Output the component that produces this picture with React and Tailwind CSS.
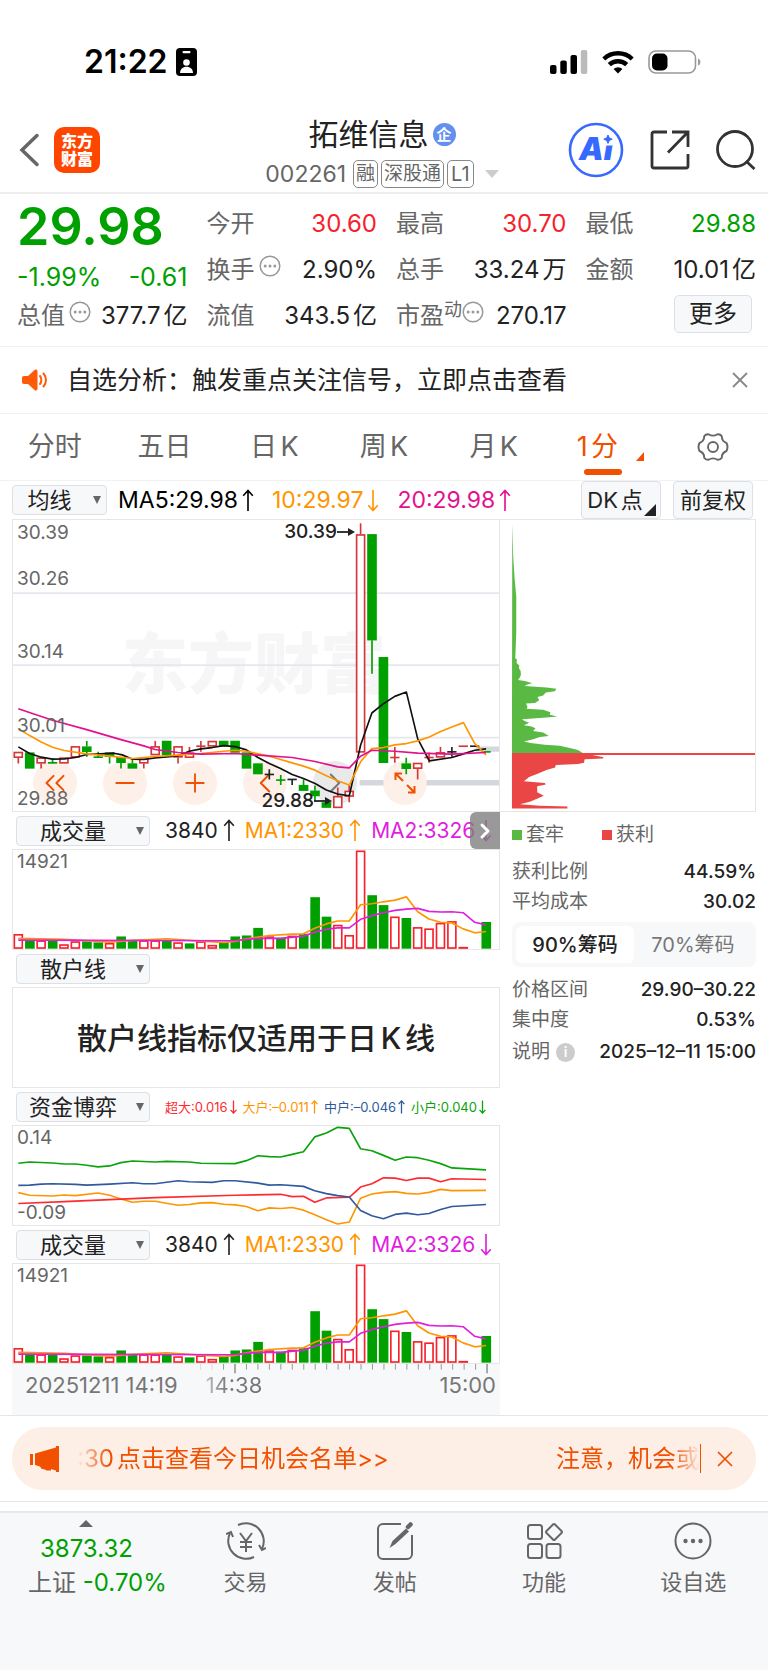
import { ChevronLeft, ChevronRight, ChevronsLeft, Minus, Plus, X } from 'lucide-react';

const STEP = 34.37;
const barX = (index) => 52 + index * STEP;

// [color, high, top, bottom, low], top === bottom draws a flat line
const candles = [
  ['r', 725, 725, 743, 760], ['g', 727, 727, 775, 775], ['r', 742, 742, 760, 775], ['g', 745, 758, 758, 760],
  ['r', 742, 742, 760, 760], ['r', 708, 708, 742, 742], ['g', 692, 709, 725, 740], ['g', 725, 741, 741, 742],
  ['g', 727, 727, 740, 760], ['g', 741, 741, 758, 775], ['g', 745, 760, 775, 775], ['r', 745, 745, 760, 775],
  ['r', 692, 708, 735, 735], ['g', 692, 692, 735, 735], ['r', 708, 708, 742, 760], ['r', 710, 727, 743, 743],
  ['r', 692, 708, 708, 725], ['r', 692, 692, 709, 709], ['g', 692, 692, 708, 708], ['g', 692, 692, 727, 727],
  ['g', 727, 727, 775, 775], ['g', 760, 760, 792, 792], ['k', 777, 793, 793, 808], ['g', 795, 810, 810, 825],
  ['k', 808, 808, 808, 825], ['g', 808, 825, 842, 842], ['g', 827, 842, 858, 875], ['g', 877, 877, 893, 893],
  ['r', 832, 858, 894, 894], ['r', 825, 842, 860, 877], ['r', 37, 70, 727, 727], ['g', 70, 70, 389, 490],
  ['g', 440, 440, 758, 758], ['r', 710, 742, 742, 758], ['g', 743, 760, 776, 792], ['r', 758, 758, 776, 808],
  ['r', 727, 742, 742, 758], ['r', 710, 726, 742, 742], ['k', 710, 725, 725, 740], ['r', 708, 708, 708, 708],
  ['k', 708, 708, 708, 708], ['g', 725, 725, 725, 725],
];

const candleColors = { r: '#d4373a', g: '#00a000', k: '#222222' };

const volumes = [
  ['r', 283], ['g', 300], ['r', 302], ['g', 302], ['r', 314], ['r', 305], ['g', 305], ['g', 308], ['r', 310],
  ['g', 290], ['g', 302], ['r', 302], ['r', 302], ['g', 302], ['r', 308], ['g', 311], ['r', 305], ['r', 316],
  ['g', 308], ['g', 290], ['g', 287], ['g', 264], ['r', 290], ['g', 294], ['r', 288], ['g', 282], ['g', 171],
  ['g', 230], ['r', 255], ['r', 286], ['r', 30], ['g', 165], ['g', 195], ['r', 230], ['g', 234], ['r', 262],
  ['r', 266], ['r', 249], ['r', 244], ['r', 322], null, ['g', 246],
];

const priceLines = [
  {
    color: '#111111',
    points: '52,710 86,730 121,741 155,747 190,746 224,742 258,733 300,731 340,729 365,734 396,747 430,748 464,743 533,737 567,723 602,716 636,712 671,706 705,709 739,719 774,742 808,760 842,775 877,793 911,805 946,820 980,840 1014,852 1049,857 1083,705 1117,608 1152,580 1186,558 1221,545 1255,685 1290,752 1358,742 1393,731 1427,720 1461,716',
  },
  {
    color: '#ff9500',
    points: '52,655 86,676 121,695 155,711 190,721 258,731 327,738 396,745 464,739 533,735 602,730 671,723 705,720 739,723 774,731 808,738 842,748 877,758 911,768 946,780 980,797 1014,812 1049,825 1083,755 1117,715 1152,712 1186,704 1221,700 1255,692 1290,680 1324,664 1358,650 1393,637 1427,700 1461,734',
  },
  {
    color: '#e3118f',
    points: '52,595 155,630 258,658 361,688 430,707 464,718 533,727 602,732 705,730 774,735 877,742 946,754 1014,770 1049,773 1083,738 1117,720 1186,723 1255,729 1358,732 1461,727',
  },
];

const volumeLines = [
  {
    color: '#ff9500',
    points: '52,296 190,299 327,307 396,302 499,297 602,304 671,308 705,305 739,297 774,292 808,287 877,283 911,282 945,265 980,252 1014,243 1049,243 1083,194 1117,191 1152,185 1187,180 1221,170 1255,215 1289,237 1324,247 1358,249 1392,267 1427,279 1461,275',
  },
  {
    color: '#e01ee0',
    points: '52,301 705,303 739,299 774,296 842,296 911,289 945,277 980,268 1014,264 1049,264 1083,238 1117,227 1152,218 1187,211 1221,207 1255,205 1289,214 1324,216 1358,215 1392,218 1427,247 1461,255',
  },
];

const fundLines = [
  {
    color: '#0ba30b',
    points: '52,217 86,213 155,216 190,219 224,219 258,223 292,228 327,225 361,215 396,210 464,213 499,211 567,213 602,217 705,218 739,209 774,194 808,197 842,198 877,190 911,182 945,137 980,125 1014,108 1049,111 1083,173 1117,179 1152,193 1187,208 1221,198 1255,200 1289,208 1324,218 1358,231 1461,237',
  },
  {
    color: '#ff9500',
    points: '52,306 86,314 155,316 190,313 224,315 292,307 327,314 361,325 396,335 430,332 464,332 533,344 567,342 602,337 636,336 671,341 705,343 739,348 774,361 808,352 842,354 877,351 911,359 945,373 980,388 1014,401 1049,395 1083,323 1117,310 1152,305 1187,303 1221,308 1255,310 1289,305 1324,296 1358,300 1461,299',
  },
  {
    color: '#ff2a2f',
    points: '52,339 190,333 327,327 464,321 705,314 842,311 877,318 911,317 945,335 980,322 1049,320 1083,289 1117,279 1152,261 1187,262 1221,269 1255,262 1289,262 1324,273 1358,264 1461,266',
  },
  {
    color: '#2f5a9e',
    points: '52,284 86,283 121,280 155,279 224,281 258,283 327,280 396,276 430,279 464,279 533,270 567,273 636,275 671,270 705,270 774,277 808,283 842,282 911,287 945,300 980,309 1014,315 1049,319 1083,360 1117,376 1152,385 1187,372 1221,368 1255,373 1289,369 1324,357 1358,348 1461,342',
  },
];

const trappedChips =
  '37,35 40,130 44,190 49,240 49,340 46,415 51,418 50,428 58,435 57,443 62,450 63,462 58,472 54,476 75,479 97,485 82,489 74,493 140,497 170,501 165,508 138,511 130,520 113,524 118,533 105,541 78,542 83,552 80,557 130,560 152,567 150,574 173,579 140,582 66,587 74,592 88,597 72,604 95,607 107,612 100,620 130,624 147,634 120,637 100,643 72,650 92,654 135,659 180,662 210,668 235,674 249,682 36,682';
const profitChips =
  '36,683 249,683 290,690 312,694 310,698 255,700 253,710 235,713 168,716 166,723 140,730 115,740 88,750 72,762 135,767 138,771 112,776 112,793 132,803 115,810 90,820 60,827 120,831 203,833 203,839 36,839';

function Arrow({ down, small }) {
  return (
    <svg
      viewBox="0 0 12 24"
      className={`${small ? 'h-[14px] w-[7px]' : 'h-[23px] w-3'} shrink-0 ${down ? 'rotate-180' : ''}`}
      fill="none"
      stroke="currentColor"
      strokeWidth={small ? 2.2 : 1.7}
      role="img"
      aria-label={down ? '下降' : '上升'}
    >
      <path d="M6 23V1.500M1 7l5-5.500L11 7" />
    </svg>
  );
}

function Dots() {
  return (
    <svg viewBox="0 0 22 22" className="h-[22px] w-[22px] shrink-0 text-[#999]" fill="none" stroke="currentColor" strokeWidth="1.5">
      <circle cx="11" cy="11" r="9.800" />
      <g fill="currentColor" stroke="none">
        <circle cx="6.200" cy="11" r="1.500" />
        <circle cx="11" cy="11" r="1.500" />
        <circle cx="15.800" cy="11" r="1.500" />
      </g>
    </svg>
  );
}

function StatusBar() {
  return (
    <div className="flex h-[106px] items-center justify-between pt-[18px] pr-[66px] pl-[84px] text-black">
      <div className="flex items-center gap-2">
        <span className="text-[32px] leading-8 font-semibold">21:22</span>
        <svg viewBox="0 0 21 28" className="h-7 w-[21px]">
          <rect width="21" height="28" rx="4" fill="#000" />
          <rect x="6.500" y="3" width="8" height="2.200" rx="1" fill="#fff" />
          <circle cx="10.500" cy="14.500" r="3.300" fill="#fff" />
          <path d="M4 25c0-4 2.800-6.300 6.500-6.300S17 21 17 25z" fill="#fff" />
        </svg>
      </div>
      <div className="flex items-center gap-[14px]">
        <svg viewBox="0 0 38 24" className="h-6 w-[38px]">
          <rect x="0" y="15" width="6.500" height="9" rx="2" />
          <rect x="10.300" y="10.500" width="6.500" height="13.500" rx="2" />
          <rect x="20.500" y="5" width="6.500" height="19" rx="2" />
          <rect x="30.800" y="0" width="6.500" height="24" rx="2" fill="#bbb" />
        </svg>
        <svg viewBox="0 0 32 24" className="h-6 w-8" fill="none" stroke="#000" strokeWidth="4.400">
          <path d="M1.800 9A20.500 20.500 0 0 1 30.200 9" />
          <path d="M7.300 14.700a12.500 12.500 0 0 1 17.400 0" />
          <path d="M16 23.500l-4.400-4.400a6.300 6.300 0 0 1 8.800 0z" fill="#000" stroke="none" />
        </svg>
        <svg viewBox="0 0 54 24" className="h-6 w-[54px]">
          <rect x="1" y="1" width="46.500" height="22" rx="7" fill="none" stroke="#999" strokeWidth="1.600" />
          <rect x="4" y="3.500" width="15.500" height="17" rx="5" />
          <path d="M50 8.500c3.200 1 3.200 6 0 7z" fill="#999" />
        </svg>
      </div>
    </div>
  );
}

function Header() {
  return (
    <header className="grid h-[88px] grid-cols-[1fr_auto_1fr] items-center border-b-2 border-[#eee] pr-3 pb-[3px] pl-4">
      <div className="flex items-center gap-3">
        <button type="button" aria-label="返回">
          <svg viewBox="0 0 26 36" className="h-9 w-[26px]" fill="none" stroke="#666" strokeWidth="3.500" strokeLinecap="round">
            <path d="M21 3.500L6 18l15 14.500" />
          </svg>
        </button>
        <a href="#home" className="flex h-[46px] w-[46px] flex-col items-center justify-center rounded-[10px] bg-[#ff4600] text-base leading-[18px] font-black text-white">
          <span>东方</span>
          <span>财富</span>
        </a>
      </div>
      <div className="pt-2 pr-2">
        <div className="flex h-10 items-center justify-center gap-1">
          <h1 className="text-[30px] leading-10 text-[#222]">拓维信息</h1>
          <span className="flex h-[23px] w-[23px] items-center justify-center rounded-full bg-[#6390ee] text-[15px] leading-none font-bold text-white">企</span>
        </div>
        <div className="flex h-10 items-center gap-[3px] text-[#666]">
          <span className="mr-1 text-[23px] leading-7">002261</span>
          <span className="rounded-[5px] border border-[#888] px-[2px] text-[19px] leading-[26px]">融</span>
          <span className="rounded-[5px] border border-[#888] px-[2px] text-[19px] leading-[26px]">深股通</span>
          <span className="rounded-[5px] border border-[#888] px-[3px] text-xl leading-[26px]">L1</span>
          <svg viewBox="0 0 14 8" className="ml-2 h-2 w-[14px]">
            <path d="M0 0h14L7 8z" fill="#ccc" />
          </svg>
        </div>
      </div>
      <div className="flex items-center justify-end gap-[26px] text-[#333]">
        <button type="button" aria-label="Ai">
          <svg viewBox="0 0 56 56" className="h-14 w-14">
            <circle cx="28" cy="28" r="26" fill="none" stroke="#3769ff" strokeWidth="2.600" />
            <text x="11" y="38" fill="#3769ff" fontFamily="Inter" fontSize="31" fontWeight="900" fontStyle="italic">Ai</text>
            <path d="M33 12h13v11.500H33z" fill="#fff" />
            <path d="M40 13l1.300 2.900 2.900 1.300-2.900 1.300L40 21.400l-1.300-2.900-2.900-1.300 2.900-1.300z" fill="#3769ff" stroke="#3769ff" />
          </svg>
        </button>
        <button type="button" aria-label="分享">
          <svg viewBox="0 0 40 40" className="h-10 w-10" fill="none" stroke="currentColor" strokeWidth="2.800">
            <path d="M17 2H4a2 2 0 0 0-2 2v32a2 2 0 0 0 2 2h32a2 2 0 0 0 2-2V24M22 2h16v15M38 2L18 22.500" />
          </svg>
        </button>
        <button type="button" aria-label="搜索">
          <svg viewBox="0 0 40 40" className="h-10 w-10" fill="none" stroke="currentColor" strokeWidth="2.800">
            <circle cx="19" cy="19" r="17.500" />
            <path d="M30 31l8.500 8" />
          </svg>
        </button>
      </div>
    </header>
  );
}

function Stat({ label, value, tone = 'text-[#222]', children }) {
  return (
    <div className="flex h-[46px] items-center justify-between whitespace-nowrap">
      <span className="flex items-center text-[#666]">
        {label}
        {children}
      </span>
      <span className={tone}>{value}</span>
    </div>
  );
}

function Quote() {
  return (
    <section className="grid grid-cols-4 gap-x-[19px] border-b border-[#f2f2f2] pt-[7px] pr-3 pb-[7px] pl-[17px] text-2xl leading-8">
      <div>
        <div className="text-[52px] leading-[52px] font-semibold text-[#00a000]">29.98</div>
        <div className="flex h-10 items-center justify-between pt-2 text-[25px] text-[#00a000]">
          <span>-1.99%</span>
          <span>-0.61</span>
        </div>
        <Stat label="总值" value="377.7亿">
          <span className="ml-1 pb-2"><Dots /></span>
        </Stat>
      </div>
      <div>
        <Stat label="今开" value="30.60" tone="text-[#f5222d]" />
        <Stat label="换手" value="2.90%">
          <span className="ml-1 pb-2"><Dots /></span>
        </Stat>
        <Stat label="流值" value="343.5亿" />
      </div>
      <div>
        <Stat label="最高" value="30.70" tone="text-[#f5222d]" />
        <Stat label="总手" value="33.24万" />
        <Stat label="市盈" value="270.17">
          <span className="pb-3 text-lg leading-6">动</span>
          <span className="pb-2"><Dots /></span>
        </Stat>
      </div>
      <div>
        <Stat label="最低" value="29.88" tone="text-[#00a000]" />
        <Stat label="金额" value="10.01亿" />
        <div className="flex h-[46px] items-center justify-end pr-1 pb-1">
          <button type="button" className="h-[38px] w-[78px] rounded-[5px] border border-[#dcdfe6] bg-[#f7f8fa] text-[#222]">更多</button>
        </div>
      </div>
    </section>
  );
}

function Notice() {
  return (
    <div className="flex h-[67px] items-center border-b border-[#f2f2f2] pr-[15px] pl-[22px]">
      <svg viewBox="0 0 26 22" className="h-[22px] w-[26px]">
        <path d="M2 7h4l6.500-6c1.500-1 3-.5 3 1.200v17.600c0 1.700-1.500 2.200-3 1.200L6 15H2c-1.300 0-2-.8-2-2V9c0-1.200.700-2 2-2z" fill="#ff5a0a" />
        <path d="M18 7c1.800 2.200 1.800 5.800 0 8M21.500 4.500c3.300 3.700 3.300 9.300 0 13" fill="none" stroke="#ff5a0a" strokeWidth="2" strokeLinecap="round" />
      </svg>
      <a href="#signal" className="ml-[19px] flex-1 text-[25px] leading-8 text-[#222]">自选分析：触发重点关注信号，立即点击查看</a>
      <button type="button" aria-label="关闭" className="text-[#888]">
        <X size={26} strokeWidth={1.7} />
      </button>
    </div>
  );
}

function PeriodTabs() {
  return (
    <nav className="grid h-[67px] grid-cols-7 items-center border-b border-[#f2f2f2] text-[27px] leading-9 text-[#666]">
      {['分时', '五日', '日K', '周K', '月K'].map((tab) => (
        <button key={tab} type="button">{tab}</button>
      ))}
      <button type="button" className="relative flex h-full items-center justify-center pr-3 text-[#f05000]">
        1分
        <svg viewBox="0 0 8 9" className="absolute right-[14px] bottom-[19px] h-[9px] w-2">
          <path d="M8 0v9H0z" fill="#f05000" />
        </svg>
        <span className="absolute bottom-[5px] left-1/2 h-[6px] w-[38px] -translate-x-1/2 rounded-full bg-[#f05000]" />
      </button>
      <button type="button" aria-label="设置" className="flex justify-center">
        <svg viewBox="0 0 32 30" className="h-[30px] w-8" fill="none" stroke="#666" strokeWidth="1.900" strokeLinejoin="round">
          <path d="M11.500 2.200Q16 5 20.500 2.200Q23.500 2 24.800 4.200Q24.600 9.200 29.500 11Q31.500 15 29.500 19Q24.600 20.800 24.800 25.800Q23.500 28 20.500 27.800Q16 25 11.500 27.800Q8.500 28 7.200 25.800Q7.400 20.800 2.500 19Q.5 15 2.500 11Q7.400 9.200 7.200 4.200Q8.500 2 11.500 2.200Z" />
          <circle cx="16" cy="15" r="5" />
        </svg>
      </button>
    </nav>
  );
}

function IndicatorSelect({ label, value, className }) {
  return (
    <span className={`relative shrink-0 ${className}`}>
      <select
        aria-label={label}
        defaultValue={value}
        className="h-[30px] w-full appearance-none rounded border border-[#dcdfe6] bg-[#f7f8fa] pr-5 text-center text-[22px] leading-7 text-[#222]"
      >
        <option>{value}</option>
      </select>
      <svg viewBox="0 0 8 8" className="pointer-events-none absolute top-[11px] right-[6px] h-2 w-2">
        <path d="M0 0h8L4 8z" fill="#666" />
      </svg>
    </span>
  );
}

function ChartToolbar() {
  return (
    <div className="flex h-[38px] items-center px-3 text-[22px] leading-7">
      <IndicatorSelect label="主图指标" value="均线" className="w-[95px]" />
      <div className="ml-[11px] flex flex-1 items-center gap-[18px] text-[23px] whitespace-nowrap">
        <span className="flex items-center gap-1 text-black">MA5:29.98<Arrow /></span>
        <span className="flex items-center gap-1 text-[#ff9500]">10:29.97<Arrow down /></span>
        <span className="flex items-center gap-1 text-[#e3118f]">20:29.98<Arrow /></span>
      </div>
      <button type="button" className="relative h-[38px] w-20 rounded border border-[#dcdfe6] bg-[#f7f8fa] pr-3 text-[#222]">
        DK点
        <svg viewBox="0 0 12 12" className="absolute right-1 bottom-[2px] h-3 w-3">
          <path d="M12 0v12H0z" fill="#222" />
        </svg>
      </button>
      <button type="button" className="mr-[3px] ml-3 h-[38px] w-20 rounded border border-[#dcdfe6] bg-[#f7f8fa] text-[#222]">前复权</button>
    </div>
  );
}

function Lines({ lines, width = 5 }) {
  return lines.map((line) => (
    <polyline key={line.color} points={line.points} fill="none" stroke={line.color} strokeWidth={width} strokeLinejoin="round" />
  ));
}

function FloatButton({ label, tone = 'bg-[#fdf0e8] text-[#f05000]', children }) {
  return (
    <button type="button" aria-label={label} className={`flex h-11 w-11 items-center justify-center rounded-full ${tone}`}>
      {children}
    </button>
  );
}

function PriceChart() {
  return (
    <div className="relative h-[293px] border border-[#e6e6e6] text-[19px] leading-6 text-[#666]">
      <div className="absolute inset-x-0 top-[104px] pr-1 text-center text-[66px] leading-[80px] font-black text-[#f6f6f6]">东方财富</div>
      {/* the candles stay readable on top of the round buttons */}
      <div className="absolute bottom-[6px] left-[20px] flex gap-[26px]">
        <FloatButton label="最早"><ChevronsLeft size={34} strokeWidth={1.4} /></FloatButton>
        <FloatButton label="缩小"><Minus size={30} strokeWidth={1.5} /></FloatButton>
        <FloatButton label="放大"><Plus size={30} strokeWidth={1.5} /></FloatButton>
        <FloatButton label="向左"><ChevronLeft size={34} strokeWidth={1.4} /></FloatButton>
        <FloatButton label="向右" tone="bg-[#e9e9e9] text-[#777]"><ChevronRight size={34} strokeWidth={1.4} /></FloatButton>
        <FloatButton label="全屏">
          <svg viewBox="0 0 24 24" className="h-6 w-6" fill="none" stroke="currentColor" strokeWidth="2">
            <path d="M2.500 9V2.500H9M2.500 2.500L10 10M21.500 15v6.500H15M21.500 21.500L14 14" />
          </svg>
        </FloatButton>
      </div>
      <svg viewBox="36 27 1464 876" preserveAspectRatio="none" className="pointer-events-none absolute inset-0 h-full w-full">
        <path d="M36 247h1464M36 464h1464M36 682h1464" stroke="#e4e7ee" strokeWidth="5" />
        <path d="M1430 717h70M1080 818h72M1282 818h218" stroke="#d4d7dd" strokeWidth="16" />
        {candles.map(([tone, high, top, bottom, low], index) => {
          const x = barX(index);
          const color = candleColors[tone];
          const flat = top === bottom;
          return (
            <g key={index} stroke={color} strokeWidth="5">
              <path d={`M${x} ${high}V${top}M${x} ${bottom}V${low}`} />
              {flat ? (
                <path d={`M${x - 14} ${top}h28`} />
              ) : (
                <rect x={x - 12} y={top + 2} width="24" height={bottom - top - 4} fill={tone === 'r' ? '#fff' : color} />
              )}
            </g>
          );
        })}
        <Lines lines={priceLines} />
      </svg>

      <span className="absolute top-[1px] left-[4px]">30.39</span>
      <span className="absolute top-[47px] left-[4px]">30.26</span>
      <span className="absolute top-[120px] left-[4px]">30.14</span>
      <span className="absolute top-[194px] left-[4px]">30.01</span>
      <span className="absolute bottom-0 left-[4px]">29.88</span>
      <span className="absolute top-0 right-[144px] flex items-center font-medium text-[#222]">
        30.39
        <PointerArrow />
      </span>
      <span className="absolute right-[167px] bottom-[-2px] flex items-center font-medium text-[#222]">
        29.88
        <PointerArrow />
      </span>
    </div>
  );
}

function PointerArrow() {
  return (
    <svg viewBox="0 0 18 10" className="h-[10px] w-[18px]">
      <path d="M0 5h13" stroke="#222" strokeWidth="1.800" />
      <path d="M11 1l7 4-7 4z" fill="#222" />
    </svg>
  );
}

function Indicator({ name, label, values, small, children }) {
  return (
    <section>
      <div className="flex h-[37px] items-center pl-1">
        <IndicatorSelect label={label} value={name} className="w-[134px]" />
        {values && (
          <div className={`ml-[15px] flex items-center whitespace-nowrap ${small ? 'gap-[6px] text-[13px]' : 'gap-[10px] text-[21px]'} leading-7`}>
            {values.map(([text, down, tone]) => (
              <span key={text} className={`flex items-center ${small ? 'gap-[2px]' : 'gap-[5px]'} ${tone}`}>
                {text}
                <Arrow down={down} small={small} />
              </span>
            ))}
          </div>
        )}
      </div>
      <div className="relative h-[101px] border border-[#e6e6e6] text-[19px] leading-6 text-[#666]">{children}</div>
    </section>
  );
}

const volumeValues = [
  ['3840', false, 'text-[#222]'],
  ['MA1:2330', false, 'text-[#ff9500]'],
  ['MA2:3326', true, 'text-[#e01ee0]'],
];

const fundValues = [
  ['超大:0.016', true, 'text-[#ff2a2f]'],
  ['大户:–0.011', false, 'text-[#ff9500]'],
  ['中户:–0.046', false, 'text-[#2f5a9e]'],
  ['小户:0.040', true, 'text-[#0ba30b]'],
];

function VolumeChart() {
  return (
    <>
      <svg viewBox="36 28 1464 300" preserveAspectRatio="none" className="absolute inset-0 h-full w-full">
        {volumes.map((bar, index) => {
          if (!bar) return null;
          const [tone, top] = bar;
          const x = barX(index);
          return tone === 'g' ? (
            <rect key={index} x={x - 14} y={top} width="29" height={327 - top} fill="#00a000" />
          ) : (
            <rect key={index} x={x - 12} y={top + 2} width="24" height={Math.max(323 - top, 1)} fill="#fff" stroke="#f5222d" strokeWidth="5" />
          );
        })}
        <Lines lines={volumeLines} />
      </svg>
      <span className="absolute top-0 left-[4px]">14921</span>
    </>
  );
}

function TimeAxis() {
  return (
    <div className="relative h-[51px] bg-[#f7f8fa] text-[22px] leading-7 text-[#777]">
      <svg viewBox="36 816 1464 30" preserveAspectRatio="none" className="absolute inset-x-0 top-0 h-[10px] w-full">
        {Array.from({ length: 26 }, (_, i) => i + 16).map((index) => (
          <path
            key={index}
            d={`M${barX(index)} 816v${index === 19 || index === 41 ? 28 : 17}`}
            stroke={index < 18 ? '#dddddd' : '#999999'}
            strokeWidth={index === 19 || index === 41 ? 5 : 3}
          />
        ))}
      </svg>
      <div className="flex items-center pt-[7px] pr-1 pl-[13px]">
        <span>20251211 14:19</span>
        <span className="ml-7 bg-linear-to-r from-[#bbb] to-[#777] to-40% bg-clip-text text-transparent">14:38</span>
        <span className="ml-auto">15:00</span>
      </div>
    </div>
  );
}

function ChipRow({ label, value, children }) {
  return (
    <div className="flex h-[30px] items-center justify-between">
      <dt className="flex items-center gap-[6px] text-[#666]">
        {label}
        {children}
      </dt>
      <dd className="font-medium text-[#222]">{value}</dd>
    </div>
  );
}

function ChipPanel() {
  return (
    <aside className="text-[19px] leading-6">
      <div className="h-[293px] border-y border-r border-[#e6e6e6]">
        <svg viewBox="0 24 768 822" preserveAspectRatio="none" className="h-full w-full">
          <polygon points={trappedChips} fill="#5ab942" />
          <polygon points={profitChips} fill="#ea4646" />
          <path d="M36 685h732" stroke="#ea4646" strokeWidth="6" />
        </svg>
      </div>
      <div className="pl-3">
        <div className="flex h-[45px] items-center gap-[38px] text-[#666]">
          <span className="flex items-center gap-1"><i className="h-[10px] w-[10px] bg-[#5ab942]" />套牢</span>
          <span className="flex items-center gap-1"><i className="h-[10px] w-[10px] bg-[#ea4646]" />获利</span>
        </div>
        <dl>
          <ChipRow label="获利比例" value="44.59%" />
          <ChipRow label="平均成本" value="30.02" />
        </dl>
        <div className="mt-[5px] mb-2 grid h-[45px] grid-cols-2 rounded-lg bg-[#f7f8fa] p-1 text-xl">
          <button type="button" className="rounded-md bg-white font-medium text-[#222]">90%筹码</button>
          <button type="button" className="text-[#777]">70%筹码</button>
        </div>
        <dl>
          <ChipRow label="价格区间" value="29.90–30.22" />
          <ChipRow label="集中度" value="0.53%" />
          <div className="pt-[2px]">
            <ChipRow label="说明" value="2025–12–11 15:00">
              <span className="flex h-[19px] w-[19px] items-center justify-center rounded-full bg-[#ccc] text-sm leading-none font-semibold text-white">i</span>
            </ChipRow>
          </div>
        </dl>
      </div>
    </aside>
  );
}

function Banner() {
  return (
    <div className="border-y border-[#e6e6e6] px-3 py-[11px]">
      <div className="flex h-[63px] items-center rounded-[31px] bg-[#fdeee6] pr-[18px] pl-[18px] text-[#f05000]">
        <svg viewBox="0 0 30 26" className="h-[26px] w-[30px] shrink-0" fill="#f05000">
          <path d="M0 8h3v11H0zM5 7.500L26 1.500V0h3v26h-3v-1.500L21 23v1.500h-4.500l-1.500-1-3.500-.8L10 20.500 5 19z" />
        </svg>
        <a
          href="#chance"
          className="ml-[17px] flex flex-1 justify-between text-2xl leading-9 whitespace-nowrap [mask-image:linear-gradient(to_right,transparent,#000_32px,#000_calc(100%-28px),transparent)]"
        >
          <span>:30点击查看今日机会名单&gt;&gt;</span>
          <span>注意，机会或</span>
        </a>
        <span className="h-[29px] w-px bg-[#f05000]" />
        <button type="button" aria-label="关闭公告" className="ml-[11px]">
          <X size={26} strokeWidth={1.6} />
        </button>
      </div>
    </div>
  );
}

function NavItem({ label, children }) {
  return (
    <a href={`#${label}`} className="flex flex-1 flex-col items-center pt-2">
      <svg viewBox="0 0 40 40" className="h-10 w-10" fill="none" stroke="#666" strokeWidth="2">
        {children}
      </svg>
      <span className="mt-[5px] leading-8">{label}</span>
    </a>
  );
}

function BottomNav() {
  return (
    <nav className="mt-[9px] flex border-t-2 border-[#e6e8ec] bg-[#f7f8fa] pb-[72px] text-[22px] text-[#666]">
      <a href="#index" className="flex w-[171px] flex-col pt-[7px] pl-7 text-2xl whitespace-nowrap text-[#00a000]">
        <svg viewBox="0 0 14 7" className="ml-[51px] h-[7px] w-[14px]">
          <path d="M7 0l7 7H0z" fill="#666" />
        </svg>
        <span className="mt-[6px] ml-3 leading-8">3873.32</span>
        <span className="mt-[2px] leading-8"><span className="text-[#666]">上证</span> -0.70%</span>
      </a>
      <NavItem label="交易">
        <path d="M12 4A18 18 0 0 1 36 28M28 36A18 18 0 0 1 4 12" />
        <path d="M0 13l5-2 2 5M40 27l-4 2-3-5" />
        <path d="M14 12l6 8 6-8M20 20v11M14 21h12M14 26h12" />
      </NavItem>
      <NavItem label="发帖">
        <path d="M26 3H8a5 5 0 0 0-5 5v25a5 5 0 0 0 5 5h24a5 5 0 0 0 5-5V14" />
        <path d="M14.500 27l3-7L31 7.500l3 3L20.500 23z" fill="#666" stroke="none" />
        <path d="M33 6l2.500-2.500" strokeWidth="4.500" strokeLinecap="round" />
      </NavItem>
      <NavItem label="功能">
        <rect x="4" y="4" width="14" height="14" rx="2.500" />
        <rect x="4" y="23" width="14" height="14" rx="2.500" />
        <rect x="22.500" y="23" width="14" height="14" rx="2.500" />
        <path d="M29 3.500q1-1 2 0l6.500 6.500q1 1 0 2L31 18.500q-1 1-2 0L22.500 12q-1-1 0-2z" />
      </NavItem>
      <NavItem label="设自选">
        <circle cx="20" cy="20" r="17.500" />
        <g fill="#666" stroke="none">
          <circle cx="12.500" cy="20" r="2.200" />
          <circle cx="20" cy="20" r="2.200" />
          <circle cx="27.500" cy="20" r="2.200" />
        </g>
      </NavItem>
    </nav>
  );
}

export default function App() {
  return (
    <main className="overflow-hidden bg-white font-['Inter','Noto_Sans_CJK_SC',sans-serif] text-[#222] [text-autospace:normal]">
      <StatusBar />
      <Header />
      <Quote />
      <Notice />
      <PeriodTabs />
      <ChartToolbar />
      <div className="grid grid-cols-[minmax(0,488fr)_minmax(0,256fr)] px-3">
        <div>
          <PriceChart />
          <div className="relative">
            <Indicator name="成交量" label="副图指标一" values={volumeValues}>
              <VolumeChart />
            </Indicator>
            <button type="button" aria-label="收起筹码" className="absolute top-0 right-0 flex h-[37px] w-[30px] items-center justify-center rounded-l-md bg-[#808080]/80 text-white">
              <ChevronRight size={24} strokeWidth={3} />
            </button>
          </div>
          <Indicator name="散户线" label="副图指标二">
            <p className="flex h-full items-center justify-center text-[30px] leading-10 font-medium text-[#222]">散户线指标仅适用于日K线</p>
          </Indicator>
          <Indicator name="资金博弈" label="副图指标三" values={fundValues} small>
            <svg viewBox="36 104 1464 300" preserveAspectRatio="none" className="absolute inset-0 h-full w-full">
              <Lines lines={fundLines} />
            </svg>
            <span className="absolute top-0 left-[4px]">0.14</span>
            <span className="absolute bottom-0 left-[4px]">-0.09</span>
          </Indicator>
          <Indicator name="成交量" label="副图指标四" values={volumeValues}>
            <VolumeChart />
          </Indicator>
          <TimeAxis />
        </div>
        <ChipPanel />
      </div>
      <Banner />
      <BottomNav />
    </main>
  );
}
